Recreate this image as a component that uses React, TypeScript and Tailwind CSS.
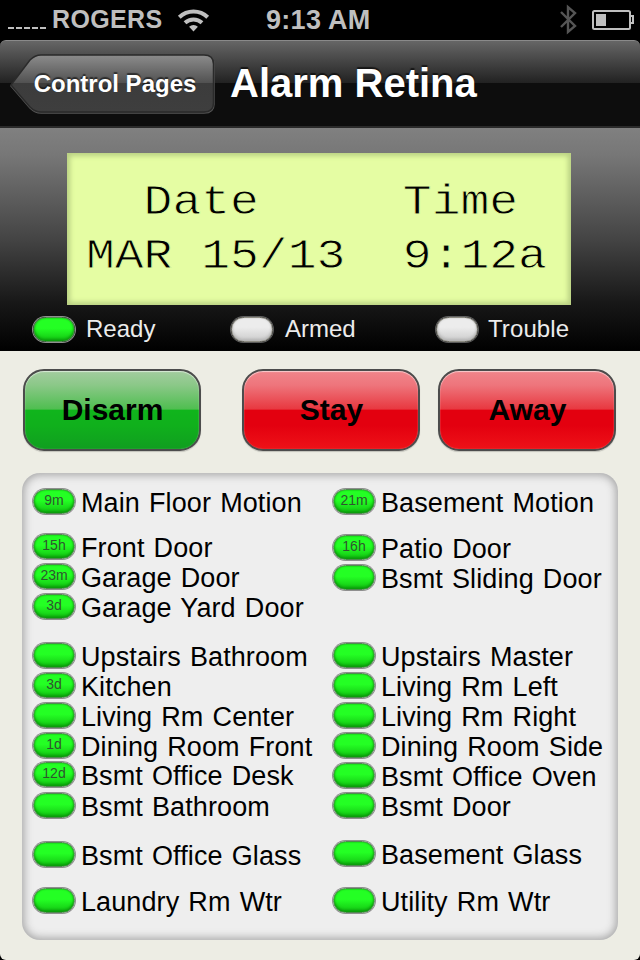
type Zone = { label: string; age?: string; gap: string };

const leftZones: Zone[] = [
  { label: 'Main Floor Motion', age: '9m', gap: 'mt-0' },
  { label: 'Front Door', age: '15h', gap: 'mt-[17px]' },
  { label: 'Garage Door', age: '23m', gap: 'mt-[2px]' },
  { label: 'Garage Yard Door', age: '3d', gap: 'mt-[2px]' },
  { label: 'Upstairs Bathroom', gap: 'mt-[21px]' },
  { label: 'Kitchen', age: '3d', gap: 'mt-[2px]' },
  { label: 'Living Rm Center', gap: 'mt-[2px]' },
  { label: 'Dining Room Front', age: '1d', gap: 'mt-[2px]' },
  { label: 'Bsmt Office Desk', age: '12d', gap: 'mt-px' },
  { label: 'Bsmt Bathroom', gap: 'mt-[3px]' },
  { label: 'Bsmt Office Glass', gap: 'mt-[21px]' },
  { label: 'Laundry Rm Wtr', gap: 'mt-[18px]' },
];

const rightZones: Zone[] = [
  { label: 'Basement Motion', age: '21m', gap: 'mt-0' },
  { label: 'Patio Door', age: '16h', gap: 'mt-[18px]' },
  { label: 'Bsmt Sliding Door', gap: 'mt-[2px]' },
  { label: 'Upstairs Master', gap: 'mt-[50px]' },
  { label: 'Living Rm Left', gap: 'mt-[2px]' },
  { label: 'Living Rm Right', gap: 'mt-[2px]' },
  { label: 'Dining Room Side', gap: 'mt-[2px]' },
  { label: 'Bsmt Office Oven', gap: 'mt-[2px]' },
  { label: 'Bsmt Door', gap: 'mt-[2px]' },
  { label: 'Basement Glass', gap: 'mt-[20px]' },
  { label: 'Utility Rm Wtr', gap: 'mt-[19px]' },
];

function Lamp({ on, age }: { on: boolean; age?: string }) {
  const fill = on
    ? 'from-[#24ff24] from-45% to-[#12c412] border-[#4f8a4f] shadow-[inset_0_-2px_3px_#0b9a0b,inset_0_0_2px_#0fa50f,0_0_0_1px_#8f8f8f]'
    : 'from-[#ececec] from-40% to-[#cccccc] border-[#8b8a80] shadow-[inset_0_-2px_3px_#b4b4b4,inset_0_0_2px_#c0c0c0,0_0_0_1px_#8f8f8fa0]';
  return (
    <span className={`m-px flex h-[25px] w-[42px] shrink-0 justify-center rounded-[12.500px] border bg-linear-to-b ${fill}`}>
      <span className="text-[14px] leading-[21px] text-[#2f552f]">{age}</span>
    </span>
  );
}

function ZoneList({ zones }: { zones: Zone[] }) {
  return (
    <div className="flex w-[300px] shrink-0 flex-col">
      {zones.map((z) => (
        <div key={z.label} className={`flex h-7 items-start ${z.gap}`}>
          <Lamp on age={z.age} />
          <span className="ml-[5px] pt-px text-[27px] leading-7 tracking-[0.1px] whitespace-pre text-black [word-spacing:1.500px]">{z.label}</span>
        </div>
      ))}
    </div>
  );
}

function ArmButton({ label, green }: { label: string; green?: boolean }) {
  const fill = green
    ? 'bg-[linear-gradient(#a3cc9f_0%,#8bc888_18%,#4fbe50_49%,#10b51c_50%,#10b01c_70%,#109e20_100%)]'
    : 'bg-[linear-gradient(#f0858b_0%,#ee757c_18%,#e83840_49%,#e3000f_50%,#e3000f_70%,#ee1218_100%)]';
  return (
    <button
      className={`h-[82px] w-[178px] rounded-[21px] border-2 border-[#4c4c4c] pb-px pl-px text-[30px] font-bold text-black shadow-[inset_0_1px_1px_#ffffff90,inset_0_0_1px_#ffffff80,0_1px_1px_#00000030] ${fill}`}
    >
      {label}
    </button>
  );
}

function StatusBar() {
  return (
    <div className="flex h-10 items-center bg-black text-[25px] font-bold text-[#bfbfbf]">
      <div className="ml-2 flex shrink-0 gap-[2px] pt-[15px]">
        {[0, 1, 2, 3, 4].map((i) => (
          <span key={i} className="h-[2px] w-[6px] bg-[#bfbfbf]" />
        ))}
      </div>
      <span className="ml-[6px] w-[112px] shrink-0 tracking-[0.35px]">ROGERS</span>
      <svg className="ml-[13px] shrink-0" width="34" height="26" viewBox="0 0 34 26" fill="none" stroke="#bfbfbf" strokeWidth="4">
        <path d="M2.3 10.2a20.5 20.5 0 0 1 28.4 0" />
        <path d="M8 15.7a12.6 12.6 0 0 1 17 0" />
        <path d="M16.5 24.5l-4.4-4.7a6.2 6.2 0 0 1 8.8 0z" fill="#bfbfbf" stroke="none" />
      </svg>
      <span className="ml-[55px] w-[120px] shrink-0 text-[27px] tracking-[0.3px] whitespace-nowrap">9:13 AM</span>
      <svg className="ml-[173px] shrink-0" width="20" height="32" viewBox="0 0 20 32" fill="none" stroke="#555" strokeWidth="2.4">
        <path d="M2 8l14 14-7 6V3l7 6L2 23" />
      </svg>
      <svg className="ml-[12px] shrink-0" width="44" height="22" viewBox="0 0 44 22" fill="none" stroke="#bfbfbf" strokeWidth="2">
        <rect x="2" y="2" width="37" height="18" rx="1.5" />
        <path d="M39 7h3v7h-3" />
        <rect x="5" y="5" width="10" height="12" fill="#bfbfbf" stroke="none" />
      </svg>
    </div>
  );
}

function NavBar() {
  return (
    <header className="flex h-[88px] rounded-t-[6px] border-t border-b-2 border-t-[#8a8a8a] border-b-[#2a2a2a] bg-[linear-gradient(#666_0%,#555_12%,#222_49%,#0d0d0d_50%,#0d0d0d_100%)]">
      <button className="relative mt-[12px] ml-[10px] h-[62px] w-[205px] shrink-0 text-[24px] font-bold text-white [text-shadow:0_-2px_1px_#0008]">
        <svg className="absolute inset-0" width="205" height="62" viewBox="0 0 205 62">
          <defs>
            <linearGradient id="back" x1="0" y1="0" x2="0" y2="1">
              <stop offset="0" stopColor="#8c8c8c" />
              <stop offset="0.5" stopColor="#505050" />
              <stop offset="0.5" stopColor="#3c3c3c" />
              <stop offset="1" stopColor="#3e3e3e" />
            </linearGradient>
          </defs>
          <path d="M1 33L20 8Q25 3 31 3H194Q204 3 204 12V51Q204 60 194 60H31Q25 60 20 55Z" fill="none" stroke="#555" strokeWidth="1.5" />
          <path d="M1 32L20 7Q25 2 31 2H194Q203.500 2 203.500 11V50Q203.500 59 194 59H31Q25 59 20 54Z" fill="url(#back)" stroke="#2a2a2a" strokeWidth="1.5" />
        </svg>
        <span className="relative block pb-px pl-[5px]">Control Pages</span>
      </button>
      <h1 className="mt-[12px] ml-[15px] text-[40px] leading-[60px] font-bold whitespace-nowrap text-white [text-shadow:0_-2px_1px_#0009]">Alarm Retina</h1>
    </header>
  );
}

export default function App() {
  return (
    <div className="h-[960px] w-[640px] overflow-hidden bg-black font-['Liberation_Sans',Arial,sans-serif]">
      <StatusBar />
      <NavBar />
      <main className="h-[832px] overflow-hidden rounded-b-[6px] bg-[#edede4]">
        <section className="h-[223px] bg-[linear-gradient(#808080_0%,#777_12%,#444_50%,#181818_78%,#000_100%)] pt-[25px]">
          <div className="ml-[67px] h-[152px] w-[504px] bg-[#e5fda3] pt-[23px] pl-[19px] shadow-[inset_0_0_5px_3px_#b9d083]">
            <pre className="origin-top scale-y-[0.88] font-['Liberation_Mono','Courier_New',monospace] text-[48px] leading-[61.400px] text-black [-webkit-text-stroke:0.900px_#e5fda3]">{'  Date     Time\nMAR 15/13  9:12a'}</pre>
          </div>
          <div className="flex h-[48px] items-center text-[24px] text-[#ececec]">
            <div className="ml-[32px] flex w-[198px] items-center gap-[10px]"><Lamp on />Ready</div>
            <div className="flex w-[205px] items-center gap-[11px]"><Lamp on={false} />Armed</div>
            <div className="flex items-center gap-[9px] tracking-[0.1px]"><Lamp on={false} />Trouble</div>
          </div>
        </section>
        <section className="flex pt-[18px] pl-[23px]">
          <ArmButton label="Disarm" green />
          <div className="ml-[41px]"><ArmButton label="Stay" /></div>
          <div className="ml-[18px]"><ArmButton label="Away" /></div>
        </section>
        <section className="mt-[22px] ml-[22px] flex h-[467px] w-[596px] rounded-[18px] bg-[#eee] pt-[15px] pl-[10px] shadow-[inset_0_0_8px_2px_#a4a4a4]">
          <ZoneList zones={leftZones} />
          <ZoneList zones={rightZones} />
        </section>
      </main>
    </div>
  );
}
